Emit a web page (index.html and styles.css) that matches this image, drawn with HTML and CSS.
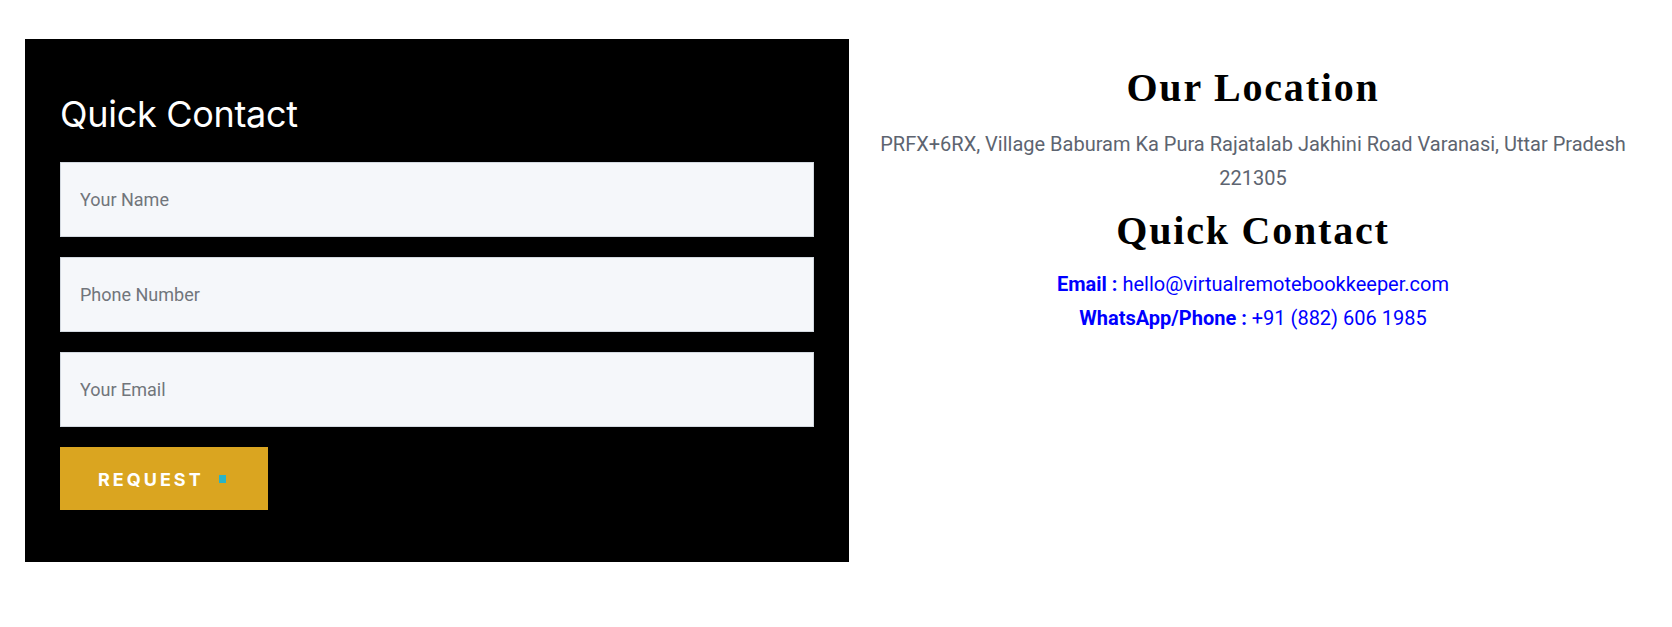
FILE: index.html
```html
<!DOCTYPE html>
<html lang="en">
<head>
<meta charset="utf-8">
<title>Contact</title>
<link rel="stylesheet" href="styles.css">
</head>
<body>
<div class="page">
  <section class="panel">
    <h2 class="panel-title">Quick Contact</h2>
    <form class="form">
      <input class="field" type="text" placeholder="Your Name">
      <input class="field" type="tel" placeholder="Phone Number">
      <input class="field" type="email" placeholder="Your Email">
      <button class="btn" type="button"><span class="btn-text">REQUEST</span><span class="btn-icon"></span></button>
    </form>
  </section>
  <section class="info">
    <h2 class="info-title">Our Location</h2>
    <p class="address">PRFX+6RX, Village Baburam Ka Pura Rajatalab Jakhini Road Varanasi, Uttar Pradesh 221305</p>
    <h2 class="info-title info-title-2">Quick Contact</h2>
    <div class="contacts">
      <div class="contact-line"><b>Email :</b> hello@virtualremotebookkeeper.com</div>
      <div class="contact-line"><b>WhatsApp/Phone :</b> +91 (882) 606 1985</div>
    </div>
  </section>
</div>
</body>
</html>
```
FILE: styles.css
```css
* { box-sizing: border-box; }
html, body { margin: 0; padding: 0; background: #fff; }
body { font-family: Roboto, "Liberation Sans", sans-serif; }

.page {
  display: flex;
  align-items: flex-start;
  padding: 39px 30px 0 25px;
}

.panel {
  width: 824px;
  flex: none;
  background: #000;
  padding: 54px 35px 52px 35px;
}

.panel-title {
  margin: 0 0 26px 0;
  font-family: Inter, "Noto Sans", sans-serif;
  font-weight: 400;
  font-size: 36px;
  line-height: 43px;
  letter-spacing: -0.3px;
  color: #fff;
}

.form {
  display: flex;
  flex-direction: column;
  align-items: flex-start;
  gap: 20px;
}

.field {
  display: block;
  width: 100%;
  height: 75px;
  margin: 0;
  padding: 0 19px;
  background: #f5f7fa;
  border: 1px solid #d3d9e0;
  border-radius: 0;
  font-family: Roboto, sans-serif;
  font-size: 18px;
  color: #333;
  outline: none;
}
.field::placeholder { color: #71757b; opacity: 1; }

.btn {
  display: flex;
  align-items: center;
  width: 208px;
  height: 63px;
  margin: 0;
  padding: 0 0 0 38px;
  background: #daa520;
  border: 0;
  border-radius: 0;
  cursor: pointer;
}
.btn-text {
  font-family: Inter, sans-serif;
  font-weight: 700;
  font-size: 18px;
  letter-spacing: 3px;
  color: #fff;
  line-height: 1;
  padding-top: 3px;
}
.btn-icon {
  width: 7px;
  height: 8px;
  margin-left: 15px;
  background: #2bb4c6;
}

.info {
  flex: 1;
  padding-left: 15px;
  text-align: center;
}

.info-title {
  margin: 25px 0 0 0;
  font-family: "Liberation Serif", "Times New Roman", serif;
  font-weight: 700;
  font-size: 40px;
  line-height: 48px;
  letter-spacing: 1.8px;
  color: #000;
}
.info-title-2 { margin-top: 12px; }

.address {
  margin: 15px 0 0 0;
  font-size: 20px;
  line-height: 34px;
  color: #5d6470;
}

.contacts {
  margin-top: 12px;
  font-size: 20px;
  line-height: 34px;
  color: #0000ff;
}
.contact-line b { font-weight: 700; }
```
